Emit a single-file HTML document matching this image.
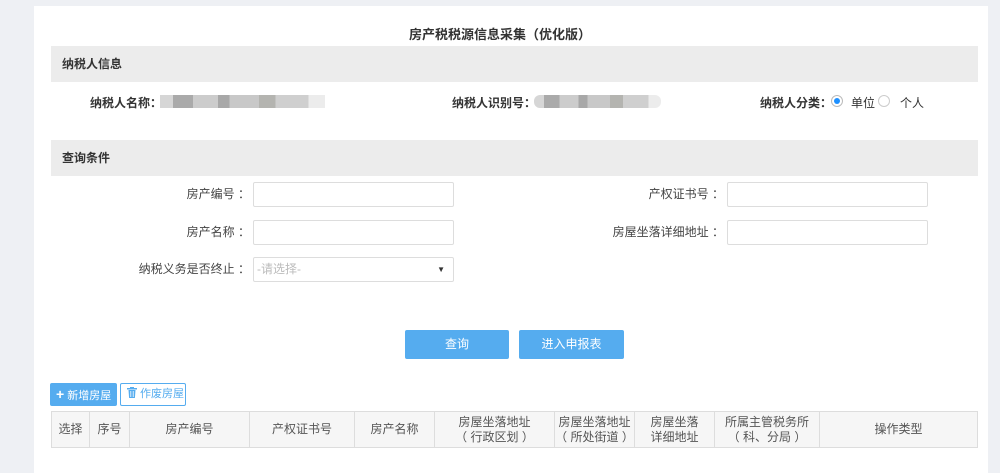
<!DOCTYPE html>
<html><head><meta charset="utf-8"><style>
*{box-sizing:border-box;margin:0;padding:0}
body{width:1000px;height:473px;background:#eef0f4;font-family:"Liberation Sans","Noto Sans CJK SC",sans-serif;font-size:12px;color:#333;position:relative;overflow:hidden}
.a{position:absolute;white-space:nowrap}
.panel{left:34px;top:6px;width:954px;height:467px;background:#fff}
.bar{left:51px;width:927px;height:36px;background:#ececec;font-weight:bold;font-size:12px;padding-left:11px;line-height:36px}
.lbl{text-align:right;width:202px;line-height:25px;height:25px;color:#444}
.inp{width:201px;height:25px;border:1px solid #ddd;border-radius:2px;background:#fff}
.btn{background:#55acef;color:#fff;text-align:center;border-radius:2px;line-height:29px;height:29px;top:330px}
.blur{height:13px;background:linear-gradient(90deg,#d6d6d6 0 8%,#aaa 8% 20%,#ccc 20% 35%,#a8a8a8 35% 42%,#c8c8c8 42% 60%,#b4b4b0 60% 70%,#cfcfcf 70% 90%,#ececec 90%)}
table{position:absolute;left:51px;top:411px;width:927px;height:37px;border-collapse:collapse;background:#f6f6f6}
td{border:1px solid #ddd;text-align:center;font-size:12px;line-height:15px;color:#555}
</style></head><body>
<div class="a panel"></div>
<div class="a" style="left:0;width:1000px;top:24px;text-align:center;font-weight:bold;font-size:13px">房产税税源信息采集（优化版）</div>
<div class="a bar" style="top:46px">纳税人信息</div>
<div class="a" style="left:90px;top:94px;font-weight:bold">纳税人名称：</div>
<div class="a blur" style="left:160px;top:95px;width:165px"></div>
<div class="a" style="left:452px;top:94px;font-weight:bold">纳税人识别号：</div>
<div class="a blur" style="left:534px;top:95px;width:127px;border-radius:6px"></div>
<div class="a" style="left:760px;top:94px;font-weight:bold">纳税人分类：</div>
<div class="a" style="left:831px;top:95px;width:12px;height:12px;border:1px solid #bbb;border-radius:50%"><div style="margin:2px;width:6px;height:6px;border-radius:50%;background:#1e90ff"></div></div>
<div class="a" style="left:851px;top:94px">单位</div>
<div class="a" style="left:878px;top:95px;width:12px;height:12px;border:1px solid #ccc;border-radius:50%"></div>
<div class="a" style="left:900px;top:94px">个人</div>
<div class="a bar" style="top:140px">查询条件</div>
<div class="a lbl" style="left:48px;top:182px">房产编号 ：</div>
<div class="a inp" style="left:253px;top:182px"></div>
<div class="a lbl" style="left:48px;top:220px">房产名称 ：</div>
<div class="a inp" style="left:253px;top:220px"></div>
<div class="a lbl" style="left:48px;top:257px">纳税义务是否终止 ：</div>
<div class="a inp" style="left:253px;top:257px;color:#bbb;line-height:23px;padding-left:3px">-请选择-<span style="position:absolute;right:8px;top:0;color:#333;font-size:8px">▼</span></div>
<div class="a lbl" style="left:522px;top:182px">产权证书号 ：</div>
<div class="a inp" style="left:727px;top:182px"></div>
<div class="a lbl" style="left:522px;top:220px">房屋坐落详细地址 ：</div>
<div class="a inp" style="left:727px;top:220px"></div>
<div class="a btn" style="left:405px;width:104px">查询</div>
<div class="a btn" style="left:519px;width:105px">进入申报表</div>
<div class="a" style="left:50px;top:383px;width:67px;height:23px;background:#55acef;color:#fff;border-radius:2px;line-height:23px;font-size:11px;padding-left:6px"><b style="font-size:14px">+</b> 新增房屋</div>
<div class="a" style="left:120px;top:383px;width:66px;height:23px;border:1px solid #55acef;color:#55acef;border-radius:2px;line-height:21px;font-size:11px;padding-left:6px"><svg width="10" height="11" viewBox="0 0 10 11" style="vertical-align:-1px"><rect x="0" y="1" width="10" height="1.5" fill="#55acef"/><rect x="3" y="0" width="4" height="1.5" fill="#55acef"/><path d="M1.5 3h7l-.6 8H2.1z" fill="#55acef"/><path d="M3.8 4v6M6.2 4v6" stroke="#fff" stroke-width=".8"/></svg> 作废房屋</div>
<table><tr>
<td style="width:38px">选择</td><td style="width:40px">序号</td><td style="width:120px">房产编号</td><td style="width:105px">产权证书号</td><td style="width:80px">房产名称</td><td style="width:120px">房屋坐落地址<br>（ 行政区划 ）</td><td style="width:80px">房屋坐落地址<br>（ 所处街道 ）</td><td style="width:80px">房屋坐落<br>详细地址</td><td style="width:105px">所属主管税务所<br>（ 科、分局 ）</td><td>操作类型</td>
</tr></table>
</body></html>
